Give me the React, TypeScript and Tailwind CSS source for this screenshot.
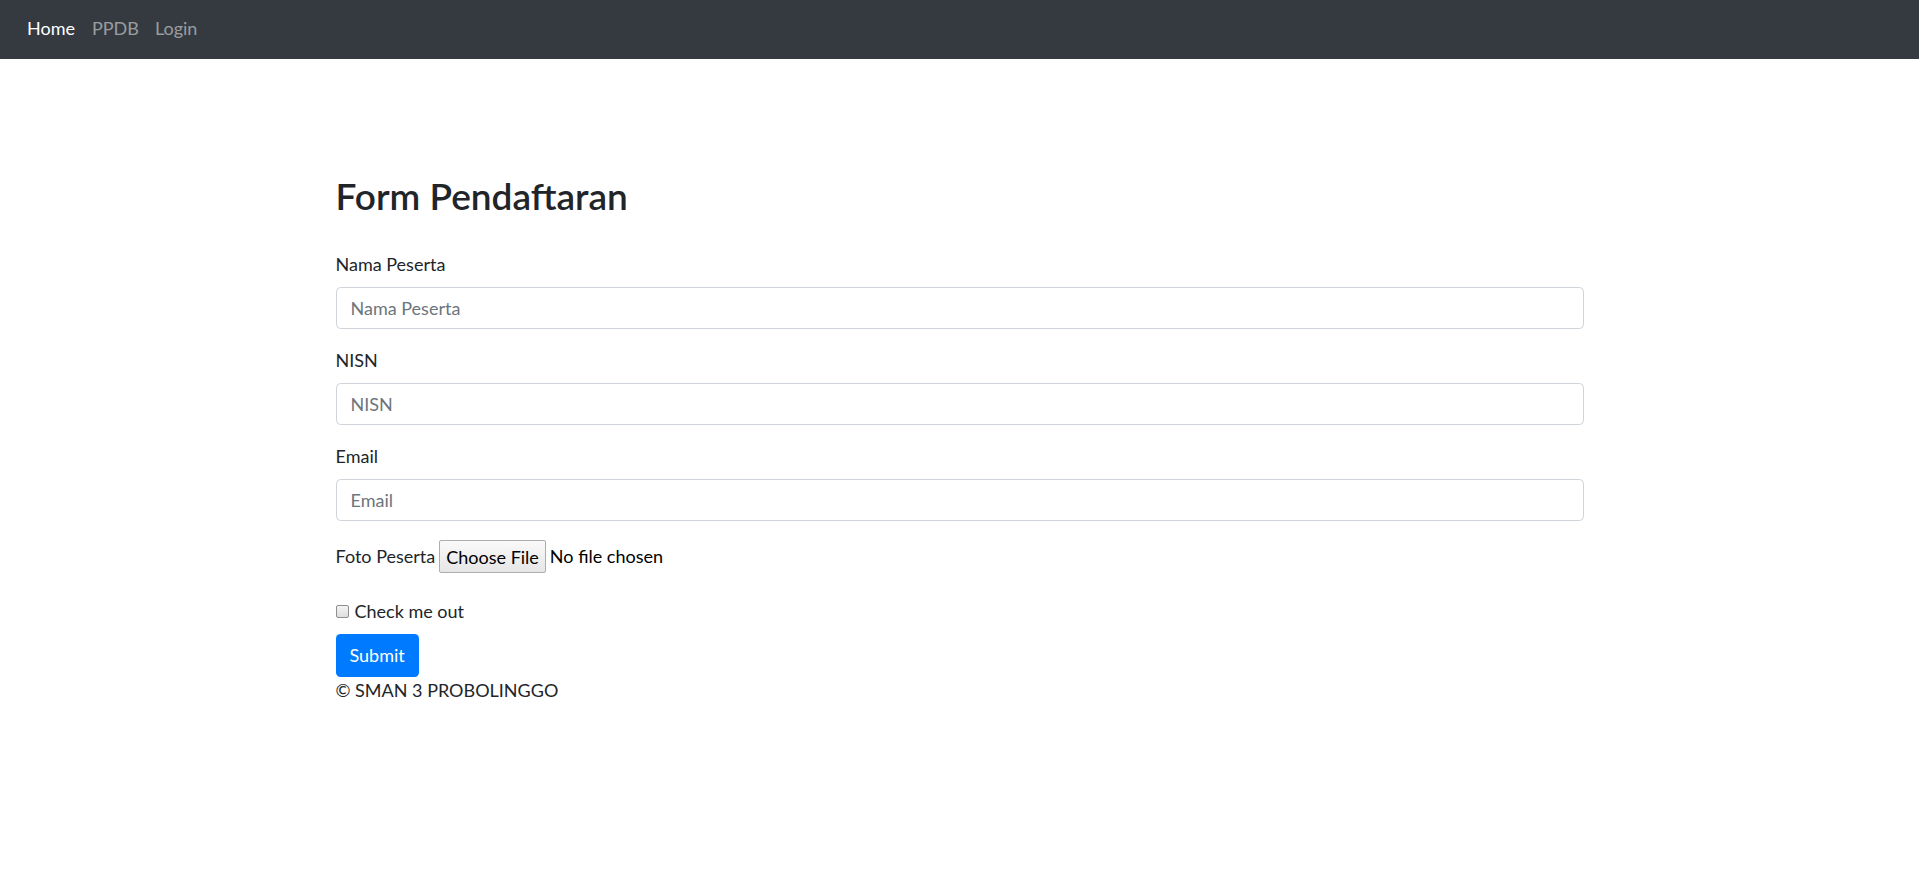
export default function App() {
  return (
    <div className="min-h-[894px] bg-white font-['Lato','Open_Sans',sans-serif] text-[18px] leading-[27px] text-[#212529]">
      <nav className="flex h-[59px] items-center bg-[#343a40] px-[18px] pb-[3px]">
        <a href="#" className="px-[9px] text-white">Home</a>
        <a href="#" className="px-[8px] text-white/50">PPDB</a>
        <a href="#" className="px-[8px] text-white/50">Login</a>
      </nav>

      <div className="mx-auto w-[1248px] pt-[115px]">
        <h2 className="mb-[34px] text-[37px] font-semibold leading-[43px]">Form Pendaftaran</h2>

        <form>
          <div className="mb-[18px]">
            <label className="mb-[9px] block">Nama Peserta</label>
            <input
              type="text"
              placeholder="Nama Peserta"
              className="block h-[42px] w-full rounded-[4.5px] border border-[#ced4da] px-[14px] text-[18px] placeholder:text-[#6c757d]"
            />
          </div>
          <div className="mb-[18px]">
            <label className="mb-[9px] block">NISN</label>
            <input
              type="text"
              placeholder="NISN"
              className="block h-[42px] w-full rounded-[4.5px] border border-[#ced4da] px-[14px] text-[18px] placeholder:text-[#6c757d]"
            />
          </div>
          <div className="mb-[18px]">
            <label className="mb-[9px] block">Email</label>
            <input
              type="email"
              placeholder="Email"
              className="block h-[42px] w-full rounded-[4.5px] border border-[#ced4da] px-[14px] text-[18px] placeholder:text-[#6c757d]"
            />
          </div>

          <div className="mb-[24px] flex h-[35px] items-center">
            <span>Foto Peserta</span>
            <button
              type="button"
              className="ml-[4px] h-[33px] rounded-[2px] border border-[#adadad] bg-gradient-to-b from-[#fafafa] to-[#e6e6e6] px-[6px] text-[18px] leading-none text-black"
            >
              Choose File
            </button>
            <span className="ml-[4px] text-black">No file chosen</span>
          </div>

          <div className="mb-[9px] flex items-center">
            <span className="inline-block h-[13px] w-[13px] rounded-[2px] border border-[#8f8f8f] bg-gradient-to-b from-[#f4f4f4] to-[#dedede]" />
            <span className="ml-[6px]">Check me out</span>
          </div>

          <button
            type="button"
            className="block h-[43px] rounded-[4.5px] bg-[#007bff] px-[14px] text-[18px] text-white"
          >
            Submit
          </button>
        </form>
        <div>© SMAN 3 PROBOLINGGO</div>
      </div>
    </div>
  );
}
